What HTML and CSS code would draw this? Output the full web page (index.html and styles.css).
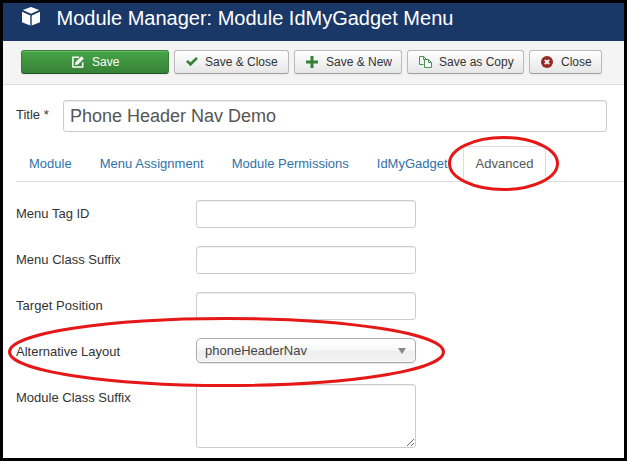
FILE: index.html
```
<!DOCTYPE html>
<html lang="en">
<head>
<meta charset="utf-8">
<title>Module Manager: Module IdMyGadget Menu</title>
<link rel="stylesheet" href="styles.css">
</head>
<body>
<div class="window">
  <header class="header">
    <svg class="cube" width="18" height="19" viewBox="0 0 18 19" fill="#fff">
      <path d="M9 0 17.200 3.100 9 6.800.8 3.100Z"/>
      <path d="M0 4.800 8.300 8.500V18.600L0 15.300Z"/>
      <path d="M18 4.800 9.700 8.500V18.600L18 15.300Z"/>
    </svg>
    <h1 class="page-title">Module Manager: Module IdMyGadget Menu</h1>
  </header>
  <div class="toolbar">
    <button class="btn btn-save"><svg width="12" height="12" viewBox="0 0 12 12"><path d="M7 1.2H.9V10.9H10.7V6.2" fill="none" stroke="#fff" stroke-width="1.5"/><path d="M3 9 3.6 6.1 9.5.2 11.8 2.5 5.9 8.4Z" fill="#fff"/></svg><span>Save</span></button>
    <button class="btn btn-close-save"><svg width="12" height="12" viewBox="0 0 12 12"><path d="M1 4.900 4.500 8.300 11 1.900" fill="none" stroke="#378137" stroke-width="2.7"/></svg><span>Save &amp; Close</span></button>
    <button class="btn btn-new"><svg width="12" height="12" viewBox="0 0 12 12"><path d="M4.5 0h3v4.5H12v3H7.500V12h-3V7.500H0v-3h4.500Z" fill="#378137"/></svg><span>Save &amp; New</span></button>
    <button class="btn btn-copy"><svg width="13" height="12" viewBox="0 0 13 12" stroke="#4b9054" fill="none"><path d="M4.500 8.500H.5V.5H4.500L7.500 3.500"/><path d="M4.500.5V3.500H7.500"/><path d="M5.500 3.500H9.500L12.500 6.500V11.500H5.500Z" fill="#fafafa"/><path d="M9.500 3.500V6.500H12.500"/></svg><span>Save as Copy</span></button>
    <button class="btn btn-close"><svg width="12" height="12" viewBox="0 0 12 12"><circle cx="6" cy="6" r="6" fill="#942a25"/><path d="M3.800 3.800 8.200 8.200M8.200 3.800 3.800 8.200" stroke="#fff" stroke-width="1.800"/></svg><span>Close</span></button>
  </div>
  <main class="content">
    <div class="title-row">
      <label for="title">Title *</label>
      <input id="title" class="field title-input" type="text" value="Phone Header Nav Demo">
    </div>
    <nav class="tabs">
      <a class="tab">Module</a>
      <a class="tab wide">Menu Assignment</a>
      <a class="tab">Module Permissions</a>
      <a class="tab">IdMyGadget</a>
      <a class="tab active">Advanced</a>
    </nav>
    <form class="form">
      <label for="tag">Menu Tag ID</label><input id="tag" class="field" type="text">
      <label for="class">Menu Class Suffix</label><input id="class" class="field" type="text">
      <label class="wide" for="pos">Target Position</label><input id="pos" class="field" type="text">
      <label>Alternative Layout</label>
      <div class="select"><span>phoneHeaderNav</span><i class="arrow"></i></div>
      <label for="suffix">Module Class Suffix</label><textarea id="suffix" class="field area"></textarea>
    </form>
  </main>
  <svg class="marks" width="627" height="461" fill="none" stroke="#e51717" stroke-width="3">
    <ellipse cx="503.500" cy="163.500" rx="54" ry="26"/>
    <ellipse cx="226.500" cy="352" rx="217" ry="33.500"/>
  </svg>
</div>
</body>
</html>
```
FILE: styles.css
```
* { box-sizing: border-box; }
body {
  margin: 0;
  font: 13px/18px "Liberation Sans", Arial, sans-serif;
  color: #333;
  background: #fff;
}
.window {
  position: relative;
  width: 627px;
  height: 461px;
  border: 3px solid #000;
  overflow: hidden;
}
.header {
  display: flex;
  align-items: flex-start;
  gap: 16.5px;
  height: 38px;
  padding: 4px 0 0 19px;
  background: #1a3867;
}
.page-title {
  margin: 0;
  font-size: 20px;
  line-height: 22px;
  font-weight: normal;
  color: #fff;
  white-space: nowrap;
}
.toolbar {
  display: flex;
  gap: 5px;
  height: 44px;
  padding: 9px 18px 0;
  background: #f4f4f4;
  border-bottom: 1px solid #dedede;
}
.btn {
  display: flex;
  align-items: center;
  gap: 7px;
  height: 24px;
  padding: 0 0 1px 11px;
  border: 1px solid #bbb;
  border-bottom-color: #a2a2a2;
  border-radius: 3px;
  background: linear-gradient(#fff, #e6e6e6);
  box-shadow: inset 0 1px 0 rgba(255,255,255,.2), 0 1px 2px rgba(0,0,0,.05);
  font: 12px/20px "Liberation Sans", Arial, sans-serif;
  color: #333;
  white-space: nowrap;
}
.btn svg { flex: none; }
.btn-save {
  width: 148px;
  padding-left: 50px;
  gap: 8px;
  color: #fff;
  background: linear-gradient(#46a546, #378137);
  border-color: #378137 #378137 #235323;
}
.btn-close-save { width: 115px; }
.btn-new { width: 108px; gap: 8px; }
.btn-copy { width: 117px; gap: 7px; }
.btn-close { width: 73px; gap: 8px; }
.content { padding: 15px 0 0 13px; }
.title-row {
  display: flex;
  align-items: flex-start;
}
.title-row label { width: 47px; padding-top: 6px; }
.field {
  display: block;
  width: 220px;
  height: 28px;
  margin: 0;
  padding: 4px 6px;
  border: 1px solid #ccc;
  border-radius: 3px;
  background: #fff;
  box-shadow: inset 0 1px 1px rgba(0,0,0,.075);
  font: 13px/18px "Liberation Sans", Arial, sans-serif;
  color: #555;
  outline: 0;
}
.title-input {
  width: 544px;
  height: 32px;
  font-size: 18px;
  line-height: 22px;
}
.tabs {
  display: flex;
  gap: 2px;
  margin-top: 14px;
  border-bottom: 1px solid #ddd;
}
.tab {
  height: 36px;
  margin-bottom: -1px;
  padding: 8px 12px;
  border: 1px solid transparent;
  border-radius: 4px 4px 0 0;
  color: #3071a9;
  white-space: nowrap;
}
.tab.active {
  color: #555;
  background: #fff;
  border-color: #ddd #ddd transparent;
}
.wide { letter-spacing: .05px; }
.form {
  display: grid;
  grid-template-columns: 180px 220px;
  row-gap: 18px;
  align-items: start;
  padding-top: 18px;
}
.form label { padding-top: 5px; }
.select {
  display: flex;
  align-items: center;
  justify-content: space-between;
  height: 25px;
  margin-bottom: 3px;
  padding: 0 9px 0 8px;
  border: 1px solid #aaa;
  border-radius: 5px;
  background: linear-gradient(#fff 20%, #f6f6f6 50%, #eee 52%, #f4f4f4 100%);
  box-shadow: 0 0 3px #fff inset, 0 1px 1px rgba(0,0,0,.1);
  color: #444;
}
.arrow {
  border: 4px solid transparent;
  border-top: 6px solid #888;
  border-bottom: 0;
}
.area { height: 64px; resize: both; }
.marks {
  position: absolute;
  left: -3px;
  top: -3px;
  pointer-events: none;
}
```
